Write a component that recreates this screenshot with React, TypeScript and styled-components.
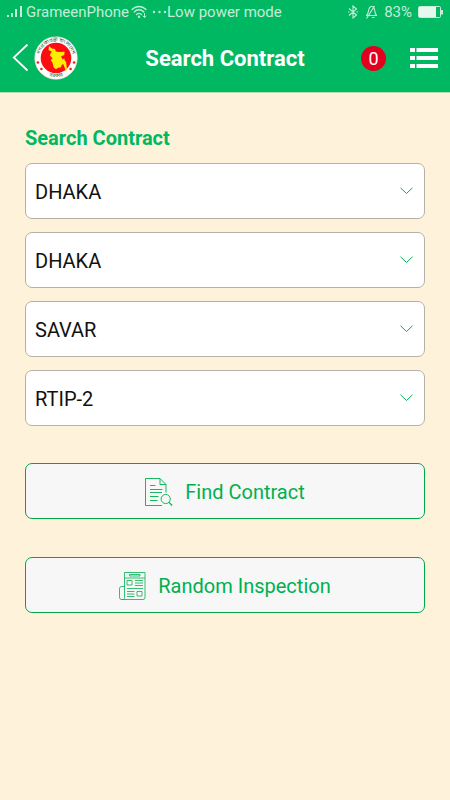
import React from "react";
import styled, { createGlobalStyle } from "styled-components";

const GREEN = "#00b862";
const INK = "#00b04f";

const GlobalStyle = createGlobalStyle`
  *, *::before, *::after { box-sizing: border-box; }
  body {
    margin: 0;
    background: #fff2da;
    font-family: Roboto, "Liberation Sans", sans-serif;
  }
`;

const Screen = styled.div`
  min-height: 100vh;
  background: #fff2da;
`;

const TopArea = styled.div`
  background: ${GREEN};
  color: #fff;
  border-bottom: 1px solid #b5dfb0;
`;

const StatusBar = styled.div`
  display: flex;
  align-items: center;
  justify-content: space-between;
  height: 24px;
  padding: 0 6px 0 7px;
  font-size: 15px;
  line-height: 24px;
  color: #c4edd8;
`;

const StatusGroup = styled.div<{ $gap: number }>`
  display: flex;
  align-items: center;
  gap: ${(p) => p.$gap}px;
  white-space: nowrap;

  svg { flex: none; display: block; }
`;

const Header = styled.header`
  display: grid;
  grid-template-columns: 1fr auto 1fr;
  align-items: center;
  height: 68px;
  padding: 0 12px;
`;

const HeaderSide = styled.div<{ $end?: boolean }>`
  display: flex;
  align-items: center;
  justify-content: ${(p) => (p.$end ? "flex-end" : "flex-start")};
  gap: ${(p) => (p.$end ? 24 : 5)}px;
`;

const Title = styled.h1`
  margin: 0;
  padding-top: 2px;
  font-size: 22px;
  line-height: 28px;
  font-weight: 700;
`;

const IconButton = styled.button`
  display: block;
  flex: none;
  padding: 0;
  border: 0;
  background: none;
  color: inherit;
  cursor: pointer;

  svg { display: block; }
`;

const CountBadge = styled.button`
  display: flex;
  align-items: center;
  justify-content: center;
  width: 25px;
  height: 25px;
  padding: 0;
  border: 0;
  border-radius: 50%;
  background: #e1001e;
  color: #fff;
  font: 400 18px/25px Roboto, sans-serif;
`;

const Content = styled.main`
  padding: 31px 25px;
`;

const SectionTitle = styled.h2`
  margin: 0 0 11px;
  font-size: 20px;
  line-height: 28px;
  font-weight: 700;
  color: ${GREEN};
`;

const Fields = styled.form`
  display: grid;
  gap: 13px;
`;

const Field = styled.label`
  display: grid;
  align-items: center;

  & > * { grid-area: 1 / 1; }

  svg {
    justify-self: end;
    margin-right: 12px;
    pointer-events: none;
  }
`;

const Select = styled.select`
  appearance: none;
  width: 100%;
  height: 56px;
  padding: 2px 40px 0 9px;
  border: 1px solid #b5b1a8;
  border-radius: 7px;
  background: #fff;
  color: #111;
  font: 400 20px/28px Roboto, sans-serif;
`;

const Actions = styled.div`
  display: grid;
  gap: 38px;
  margin-top: 37px;
`;

const ActionButton = styled.button`
  display: flex;
  align-items: center;
  justify-content: center;
  gap: 12px;
  height: 56px;
  padding: 2px 12px 0;
  border: 1px solid #00a848;
  border-radius: 7px;
  background: #f7f7f7;
  color: ${INK};
  font: 400 20px/28px Roboto, sans-serif;
  cursor: pointer;
`;

const SignalIcon = () => (
  <svg width="17" height="14" viewBox="0 0 17 14" fill="currentColor" aria-hidden="true">
    <rect x="0" y="10" width="2" height="2" />
    <rect x="4" y="8" width="2" height="4" />
    <rect x="8" y="4" width="2" height="8" />
    <rect x="13" y="1" width="2" height="11" />
  </svg>
);

const WifiIcon = () => (
  <svg width="17" height="14" viewBox="0 0 17 14" fill="none" stroke="currentColor" strokeWidth="1.3" strokeLinecap="round" aria-hidden="true">
    <path d="M1 4.500C5 .5 11 .5 15 4.500M3.200 7c2.700-3 6.900-3 9.600 0M5.500 9.500c1.500-1.600 3.500-1.600 5 0" />
    <circle cx="8" cy="11.700" r=".6" fill="currentColor" />
    <path d="M13.500 8.500v4M12 11l1.500 1.500 1.500-1.500" strokeWidth="1" />
  </svg>
);

const DotsIcon = () => (
  <svg width="17" height="4" viewBox="0 0 17 4" fill="currentColor" aria-hidden="true">
    <circle cx="4" cy="2" r="1.200" />
    <circle cx="9.500" cy="2" r="1.200" />
    <circle cx="15" cy="2" r="1.200" />
  </svg>
);

const BluetoothIcon = () => (
  <svg width="12" height="14" viewBox="0 0 12 14" fill="none" stroke="currentColor" strokeWidth="1.100" aria-hidden="true">
    <path d="M2 3.500l7.500 6.500L6 13V1l3.500 3L2 10.500M1 7h1.500M9.500 7H11" />
  </svg>
);

const MutedBellIcon = () => (
  <svg width="13" height="14" viewBox="0 0 13 14" fill="none" stroke="currentColor" strokeWidth="1.100" strokeLinejoin="round" aria-hidden="true">
    <path d="M1.500 10.500C3 9 3.200 8 3.600 5.500 4 3 5.200 1.500 6.800 1.500s2.600 1.500 2.900 4c.2 2.500.4 3.500 1.900 5zM7 12.500h2.500M1.500 13.500L9.500 1" />
  </svg>
);

const BatteryIcon = () => (
  <svg width="26" height="13" viewBox="0 0 26 13" aria-hidden="true">
    <rect x=".5" y=".5" width="22" height="11" rx="1" fill="none" stroke="currentColor" />
    <rect x="1" y="1" width="17" height="10" fill="#e6f7ef" />
    <path d="M24 4v4.500" stroke="currentColor" strokeWidth="2" />
  </svg>
);

const BackIcon = () => (
  <svg width="17" height="28" viewBox="0 0 17 28" fill="none" stroke="currentColor" strokeWidth="1.800" aria-hidden="true">
    <path d="M15.500 .5L1.800 13.500l13.700 13" />
  </svg>
);

const Seal = () => (
  <svg width="44" height="44" viewBox="0 0 44 44" role="img" aria-label="Government seal">
    <defs>
      <path id="seal-top" d="M6.400 28A16.700 16.700 0 1 1 37.600 28" />
      <path id="seal-bottom" d="M6 32.500A19.200 19.200 0 0 0 38 32.500" />
    </defs>
    <circle cx="22" cy="22" r="21.300" fill="#fff" stroke="#e4d9c4" strokeWidth=".6" />
    <circle cx="22" cy="22" r="15.300" fill="#fb0d12" />
    <path
      d="M15 10l2.800 2.600 3.200.4.800 2.500 3.200.5 5.600-.3-.3 3.300-3.200 1.300 1.300 2.900 1.900-.7.600 2.300 1.200 1.200.8 7-.8 2.200-1.700-4.200-1.200-3-1.600.9-.6 2.300-2.700.6-2.500 1.500-2.200-2.100-1.100-4.400-1.800-2.700 1.900-1.600-2.700-3 .8-2.200 1.300-1.600-3.500-1.700z"
      fill="#ffed00"
    />
    <g fill="#e8202a">
      <circle cx="3.900" cy="26.500" r="1.300" />
      <circle cx="7.400" cy="33" r="1.300" />
      <circle cx="40.100" cy="26.500" r="1.300" />
      <circle cx="36.600" cy="33" r="1.300" />
    </g>
    <g fill="#175c3c" textAnchor="middle" fontFamily="'Noto Sans Bengali', 'Noto Sans', sans-serif">
      <text fontSize="5"><textPath href="#seal-top" startOffset="50%">গণপ্রজাতন্ত্রী বাংলাদেশ</textPath></text>
      <text fontSize="5"><textPath href="#seal-bottom" startOffset="50%">সরকার</textPath></text>
    </g>
  </svg>
);

const MenuIcon = () => (
  <svg width="28" height="20" viewBox="0 0 28 20" fill="currentColor" aria-hidden="true">
    <path d="M0 0h5v4H0zM6.500 0H28v4H6.500zM0 8h5v4H0zM6.500 8H28v4H6.500zM0 16h5v4H0zM6.500 16H28v4H6.500z" />
  </svg>
);

const ChevronIcon = () => (
  <svg width="13" height="8" viewBox="0 0 13 8" fill="none" stroke={INK} strokeWidth="1" aria-hidden="true">
    <path d="M.5 .8l6 5.700 6-5.700" />
  </svg>
);

const FindIcon = () => (
  <svg width="28" height="28" viewBox="0 0 28 28" fill="none" stroke="currentColor" strokeWidth=".9" strokeLinejoin="round" aria-hidden="true">
    <path d="M17 27.500H.5v-27H15l6 6v8M15 .5v6h6" />
    <path d="M5 7.500h5.500M5 11.500h12.500M5 14.500h12M5 18.500h8.500M5 22.500h7.500" />
    <circle cx="20.700" cy="21" r="4.600" />
    <path d="M24 24.300l3.200 3.200" strokeWidth="1.200" />
  </svg>
);

const NewsIcon = () => (
  <svg width="27" height="28" viewBox="0 0 27 28" fill="none" stroke="currentColor" strokeWidth=".8" strokeLinejoin="round" aria-hidden="true">
    <path d="M5.500 14.500H2.500a2 2 0 0 0-2 2V25.500a2 2 0 0 0 2 2h21.500a2 2 0 0 0 2-2V.5H5.500v25a2 2 0 0 1-3 2M5.500 6h20.500" />
    <path d="M10.500 2.500h10.500v1.500H10.500z" />
    <path d="M8 8.500h5v4.500H8zM18 19.500h5v4.500h-5z" />
    <path d="M16 8.500h8M16 11h8M16 13.500h8M8 16.500h16M8 19.500h7.500M8 22h7.500M8 24.500h7.500" />
  </svg>
);

const FILTERS = [
  { label: "Division", value: "DHAKA" },
  { label: "District", value: "DHAKA" },
  { label: "Upazila", value: "SAVAR" },
  { label: "Project", value: "RTIP-2" },
];

export default function App() {
  return (
    <>
      <GlobalStyle />
      <Screen>
        <TopArea>
          <StatusBar>
            <StatusGroup $gap={2}>
              <SignalIcon />
              <span>GrameenPhone</span>
              <WifiIcon />
              <StatusGroup $gap={0}>
                <DotsIcon />
                <span>Low power mode</span>
              </StatusGroup>
            </StatusGroup>
            <StatusGroup $gap={6}>
              <BluetoothIcon />
              <MutedBellIcon />
              <span>83%</span>
              <BatteryIcon />
            </StatusGroup>
          </StatusBar>
          <Header>
            <HeaderSide>
              <IconButton type="button" aria-label="Back"><BackIcon /></IconButton>
              <Seal />
            </HeaderSide>
            <Title>Search Contract</Title>
            <HeaderSide $end>
              <CountBadge type="button" aria-label="Notifications: 0">0</CountBadge>
              <IconButton type="button" aria-label="Menu"><MenuIcon /></IconButton>
            </HeaderSide>
          </Header>
        </TopArea>
        <Content>
          <SectionTitle>Search Contract</SectionTitle>
          <Fields>
            {FILTERS.map((f) => (
              <Field key={f.label}>
                <Select aria-label={f.label} defaultValue={f.value}>
                  <option value={f.value}>{f.value}</option>
                </Select>
                <ChevronIcon />
              </Field>
            ))}
          </Fields>
          <Actions>
            <ActionButton type="button"><FindIcon />Find Contract</ActionButton>
            <ActionButton type="button"><NewsIcon />Random Inspection</ActionButton>
          </Actions>
        </Content>
      </Screen>
    </>
  );
}
